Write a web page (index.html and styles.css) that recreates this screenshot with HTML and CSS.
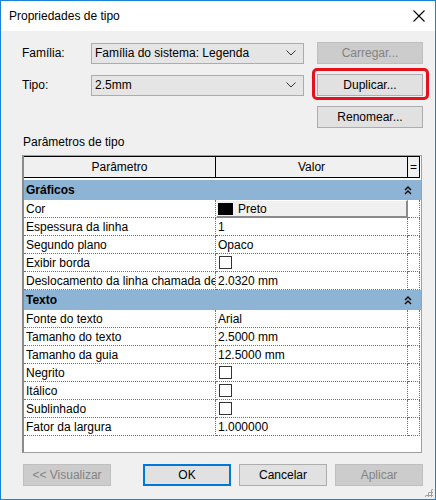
FILE: index.html
```html
<!DOCTYPE html>
<html lang="pt">
<head>
    <meta charset="UTF-8">
    <title>Propriedades de tipo</title>
    <link rel="stylesheet" href="styles.css">
</head>
<body>

<div class="dialog">

    <div class="titlebar">
        <span class="tittel">Propriedades de tipo</span>
        <svg class="lukk" width="12" height="12" viewBox="0 0 12 12">
            <path d="M0.5 0.5 L11.5 11.5 M11.5 0.5 L0.5 11.5" stroke="#000" stroke-width="1.1" fill="none"/>
        </svg>
    </div>

    <div class="innhold">

        <div class="skjema">
            <span class="etikett">Família:</span>
            <div class="combo">
                <span>Família do sistema: Legenda</span>
                <svg width="10" height="6" viewBox="0 0 10 6"><path d="M0.5 0.5 L5 5 L9.5 0.5" stroke="#333" fill="none"/></svg>
            </div>
            <button class="knapp av">Carregar...</button>

            <span class="etikett">Tipo:</span>
            <div class="combo">
                <span>2.5mm</span>
                <svg width="10" height="6" viewBox="0 0 10 6"><path d="M0.5 0.5 L5 5 L9.5 0.5" stroke="#333" fill="none"/></svg>
            </div>
            <button class="knapp markert">Duplicar...</button>

            <span></span>
            <span></span>
            <button class="knapp">Renomear...</button>
        </div>

        <p class="grupptekst">Parâmetros de tipo</p>

        <div class="ramme">
            <div class="hode">
                <div class="hcelle">Parâmetro</div>
                <div class="hcelle">Valor</div>
                <div class="hcelle">=</div>
            </div>

            <div class="seksjon">
                <span>Gráficos</span>
                <svg width="8" height="9" viewBox="0 0 8 9"><path d="M1 4 L4 1 L7 4 M1 8 L4 5 L7 8" stroke="#000" stroke-width="1.4" fill="none"/></svg>
            </div>
            <div class="rad">
                <div class="celle">Cor</div>
                <div class="celle knappcelle"><span class="farge"></span>Preto</div>
                <div class="celle"></div>
            </div>
            <div class="rad">
                <div class="celle">Espessura da linha</div>
                <div class="celle">1</div>
                <div class="celle"></div>
            </div>
            <div class="rad">
                <div class="celle">Segundo plano</div>
                <div class="celle">Opaco</div>
                <div class="celle"></div>
            </div>
            <div class="rad">
                <div class="celle">Exibir borda</div>
                <div class="celle"><span class="boks"></span></div>
                <div class="celle"></div>
            </div>
            <div class="rad">
                <div class="celle">Deslocamento da linha chamada de</div>
                <div class="celle">2.0320 mm</div>
                <div class="celle"></div>
            </div>

            <div class="seksjon">
                <span>Texto</span>
                <svg width="8" height="9" viewBox="0 0 8 9"><path d="M1 4 L4 1 L7 4 M1 8 L4 5 L7 8" stroke="#000" stroke-width="1.4" fill="none"/></svg>
            </div>
            <div class="rad">
                <div class="celle">Fonte do texto</div>
                <div class="celle">Arial</div>
                <div class="celle"></div>
            </div>
            <div class="rad">
                <div class="celle">Tamanho do texto</div>
                <div class="celle">2.5000 mm</div>
                <div class="celle"></div>
            </div>
            <div class="rad">
                <div class="celle">Tamanho da guia</div>
                <div class="celle">12.5000 mm</div>
                <div class="celle"></div>
            </div>
            <div class="rad">
                <div class="celle">Negrito</div>
                <div class="celle"><span class="boks"></span></div>
                <div class="celle"></div>
            </div>
            <div class="rad">
                <div class="celle">Itálico</div>
                <div class="celle"><span class="boks"></span></div>
                <div class="celle"></div>
            </div>
            <div class="rad">
                <div class="celle">Sublinhado</div>
                <div class="celle"><span class="boks"></span></div>
                <div class="celle"></div>
            </div>
            <div class="rad">
                <div class="celle">Fator da largura</div>
                <div class="celle">1.000000</div>
                <div class="celle"></div>
            </div>
        </div>

        <div class="bunn">
            <button class="knapp av forhand">&lt;&lt; Visualizar</button>
            <button class="knapp standard">OK</button>
            <button class="knapp">Cancelar</button>
            <button class="knapp av">Aplicar</button>
        </div>

    </div>

    <div class="grep"></div>

</div>

</body>
</html>
```

FILE: styles.css
```css
body{
    margin: 0;
    font-family: "Liberation Sans", Arial, sans-serif;
    font-size: 12px;
    color: #000;
}

.dialog{
    position: relative;
    box-sizing: border-box;
    width: 436px;
    height: 500px;
    border: 1px solid #1883d7;
    background-color: #f0f0f0;
}

.titlebar{
    height: 30px;
    background-color: #fff;
    display: flex;
    align-items: center;
    justify-content: space-between;
    padding: 0 10px 0 8px;
}
.tittel{
    font-size: 12px;
    padding-bottom: 1px;
}

.innhold{
    padding: 11px 12px 0 21px;
}

/* familie / type */
.skjema{
    display: grid;
    grid-template-columns: 69px 213px 1fr;
    grid-auto-rows: 22px;
    row-gap: 10px;
    align-items: center;
}
.combo{
    box-sizing: border-box;
    height: 21px;
    border: 1px solid #acacac;
    background-color: #e5e5e5;
    display: flex;
    align-items: center;
    justify-content: space-between;
    padding: 0 7px 0 3px;
}

.knapp{
    box-sizing: border-box;
    justify-self: end;
    width: 106px;
    height: 22px;
    border: 1px solid #adadad;
    background-color: #e1e1e1;
    font-family: inherit;
    font-size: 12px;
    color: #000;
    padding: 0;
}
.knapp.av{
    background-color: #cccccc;
    border-color: #bfbfbf;
    color: #838383;
}
.knapp.standard{
    border: 2px solid #0078d7;
}
.markert{
    position: relative;
}
.markert::after{
    content: "";
    position: absolute;
    top: -7px;
    left: -6px;
    right: -7px;
    bottom: -5px;
    border: 3px solid #e8101a;
    border-radius: 5px;
}

.grupptekst{
    margin: 7px 0 0 1px;
    line-height: 15px;
}

/* parametertabell */
.ramme{
    box-sizing: border-box;
    width: 400px;
    height: 298px;
    margin-top: 5px;
    background-color: #fff;
    border: 1px solid #a0a0a0;
    border-left: 2px solid #8a8a8a;
}

.hode{
    display: grid;
    grid-template-columns: 192px 192px 12px;
    height: 22px;
    margin-bottom: 2px;
}
.hcelle{
    box-sizing: border-box;
    background-color: #f0f0f0;
    border-top: 1px solid #000;
    border-bottom: 1px solid #000;
    border-right: 1px solid #000;
    display: flex;
    align-items: center;
    justify-content: center;
}

.seksjon{
    height: 20px;
    background-color: #8db4d4;
    font-weight: bold;
    display: flex;
    align-items: center;
    justify-content: space-between;
    padding: 0 9px 0 2px;
}

.rad{
    display: grid;
    grid-template-columns: 192px 192px 12px;
    height: 18px;
}
.celle{
    box-sizing: border-box;
    border-right: 1px dotted #707070;
    border-bottom: 1px dotted #707070;
    padding-left: 2px;
    display: flex;
    align-items: center;
    white-space: nowrap;
    overflow: hidden;
}
.knappcelle{
    background-color: #f0f0f0;
    border-top: 1px solid #fff;
    border-left: 1px solid #fff;
    border-right: 2px solid #8a8a8a;
    border-bottom: 2px solid #8a8a8a;
    padding-left: 1px;
}
.farge{
    width: 15px;
    height: 12px;
    background-color: #000;
    margin-right: 5px;
}
.boks{
    box-sizing: border-box;
    width: 13px;
    height: 13px;
    border: 1px solid #333;
    background-color: #fff;
    margin-left: 1px;
}

.bunn{
    display: flex;
    gap: 8px;
    margin: 11px 0 0 1px;
}
.bunn .knapp{
    width: 88px;
}
.forhand{
    margin-right: 24px;
}

/* hjørnegrep nede til høyre */
.grep{
    position: absolute;
    right: 2px;
    bottom: 2px;
    width: 9px;
    height: 9px;
    background-image: radial-gradient(circle, #a0a0a0 1px, transparent 1.2px);
    background-size: 3px 3px;
    clip-path: polygon(100% 0, 100% 100%, 0 100%);
}
```
